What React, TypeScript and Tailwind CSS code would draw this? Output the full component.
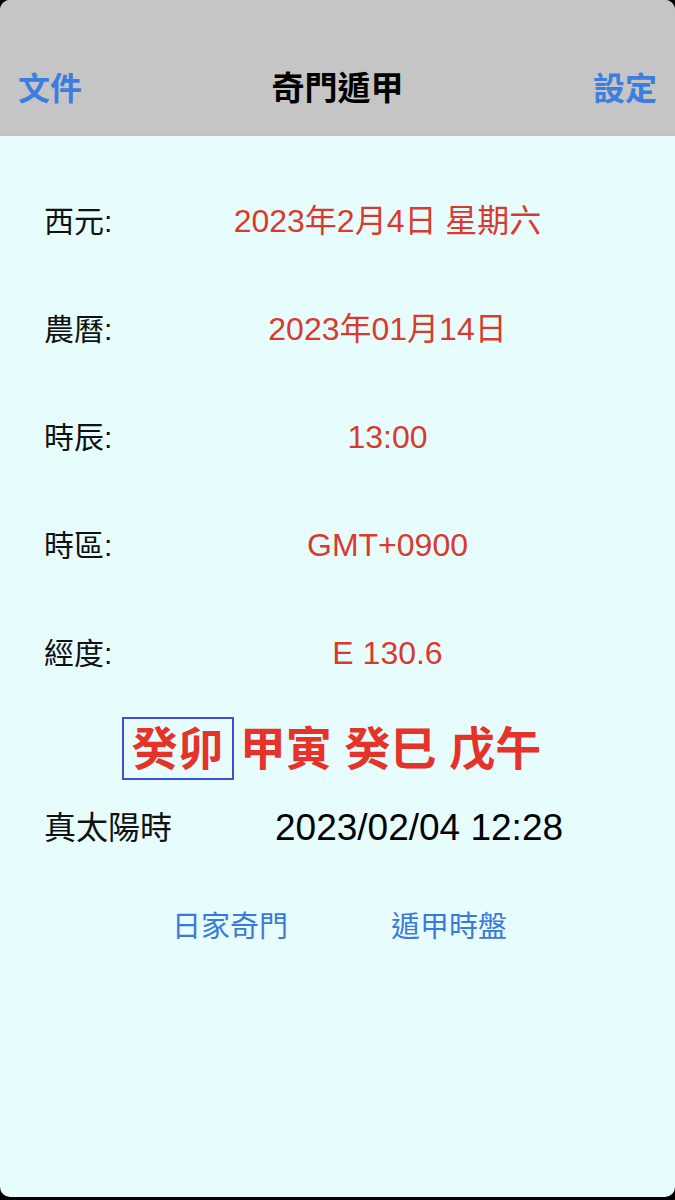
const rows = [
  { label: "西元:", value: "2023年2月4日 星期六" },
  { label: "農曆:", value: "2023年01月14日" },
  { label: "時辰:", value: "13:00" },
  { label: "時區:", value: "GMT+0900" },
  { label: "經度:", value: "E 130.6" },
];

export default function App() {
  return (
    <div
      className="w-[675px] h-[1200px] bg-black"
      style={{ fontFamily: '"Liberation Sans", "Noto Sans CJK TC", sans-serif' }}
    >
      <div className="h-[1197px] rounded-[10px] overflow-hidden bg-[#e7fdfd] flex flex-col">
        {/* 標題列 */}
        <header className="h-[136px] bg-[#c5c5c5] flex items-end justify-between px-[18px] pb-[26px] border-b border-[#b8c4c4]">
          <span className="text-[32px] leading-[40px] font-bold text-[#3b7ee0]">文件</span>
          <span className="text-[33px] leading-[40px] font-bold text-black">奇門遁甲</span>
          <span className="text-[32px] leading-[40px] font-bold text-[#3b7ee0]">設定</span>
        </header>

        <div className="pt-[31px]">
          {rows.map((r) => (
            <div key={r.label} className="h-[108px] flex items-center">
              <div className="w-[100px] shrink-0 pl-[44px] text-[30px] text-[#111] whitespace-nowrap">
                {r.label}
              </div>
              <div className="flex-1 text-center text-[32px] text-[#d93a2e] whitespace-nowrap">
                {r.value}
              </div>
            </div>
          ))}
        </div>

        {/* 四柱 */}
        <div className="mt-[10px] flex items-center justify-center pr-[12px]">
          <div className="h-[63px] border-2 border-[#3f4fd2] px-[8px] flex items-center text-[46px] font-bold text-[#e5332a] leading-none">
            癸卯
          </div>
          <div className="ml-[6px] text-[46px] font-bold text-[#e5332a] leading-none whitespace-nowrap">
            甲寅 癸巳 戊午
          </div>
        </div>

        <div className="mt-[28px] h-[40px] flex items-center">
          <div className="w-[275px] shrink-0 pl-[44px] text-[32px] text-[#111]">真太陽時</div>
          <div className="text-[37px] text-black whitespace-nowrap">2023/02/04 12:28</div>
        </div>

        <div className="mt-[60px] h-[40px] flex items-center justify-center gap-[103px] pl-[4px] text-[29px] text-[#3b7ad8]">
          <span>日家奇門</span>
          <span>遁甲時盤</span>
        </div>
      </div>
    </div>
  );
}
